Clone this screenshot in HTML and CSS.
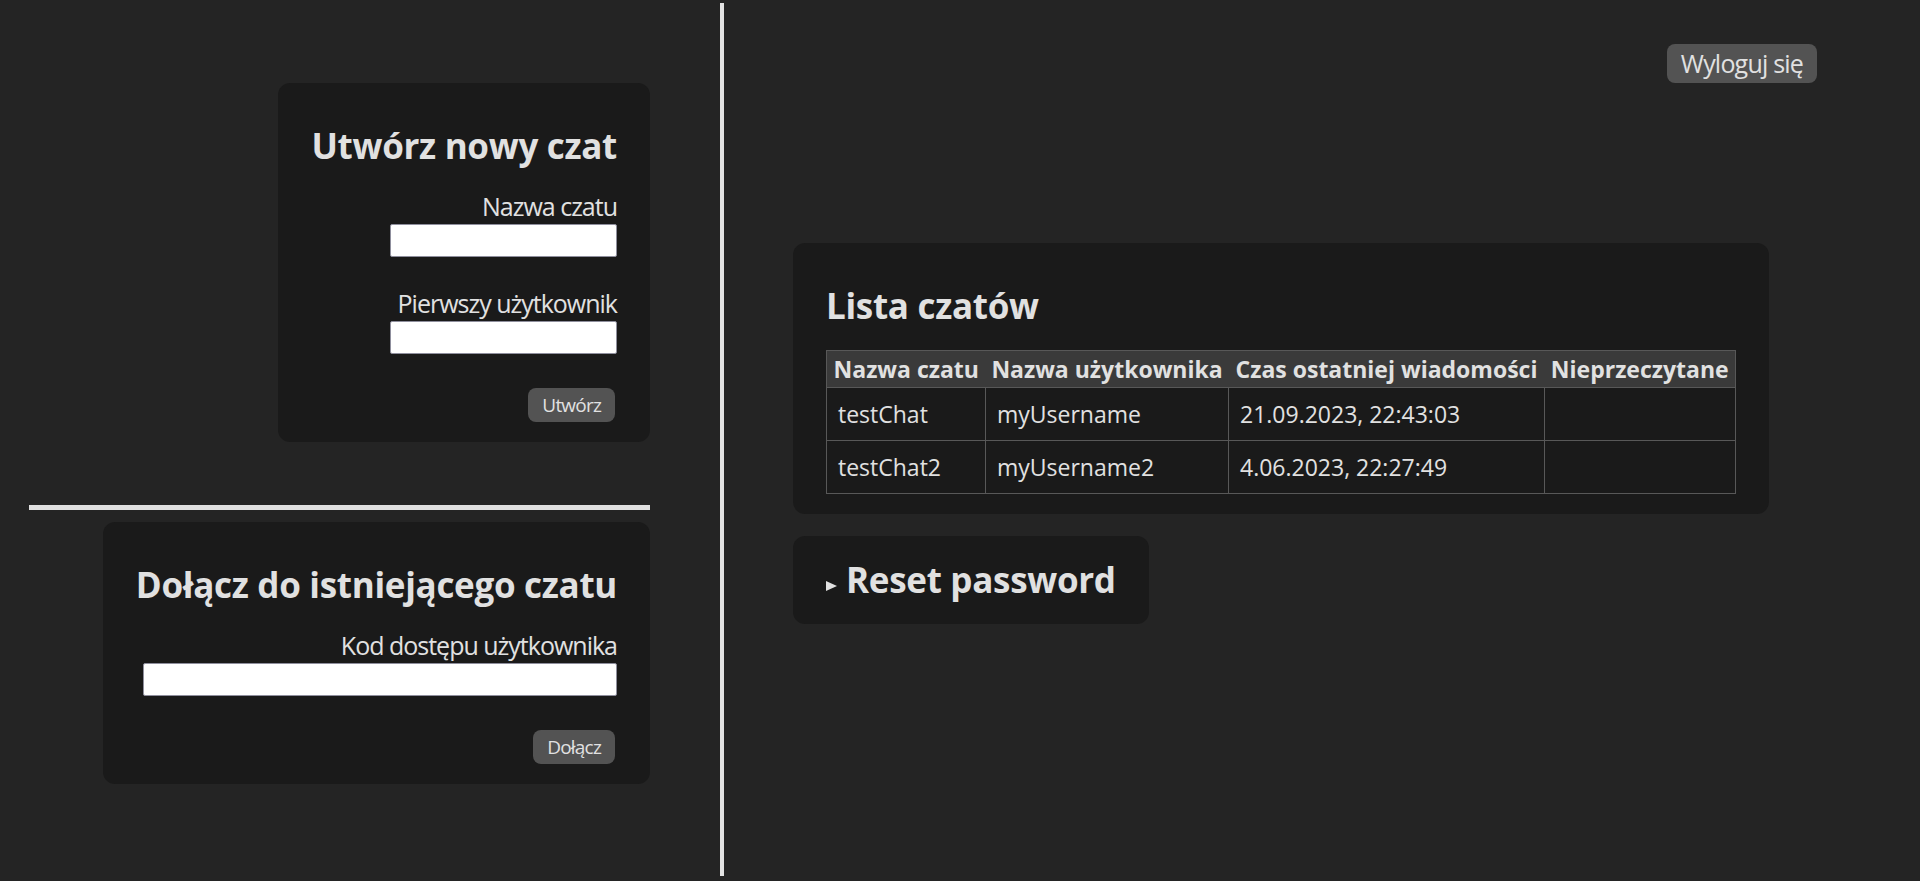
FILE: index.html
```html
<!DOCTYPE html>
<html lang="pl">
<head>
<meta charset="utf-8">
<title>Czat</title>
<link rel="stylesheet" href="styles.css">
</head>
<body>
<div class="layout">
  <aside class="side">
    <form class="card card-create">
      <h2 class="card-title">Utwórz nowy czat</h2>
      <label class="field-label">Nazwa czatu</label>
      <input class="field-input field-short" type="text">
      <label class="field-label field-gap">Pierwszy użytkownik</label>
      <input class="field-input field-short" type="text">
      <button class="btn btn-small" type="button">Utwórz</button>
    </form>
    <hr class="divider">
    <form class="card card-join">
      <h2 class="card-title">Dołącz do istniejącego czatu</h2>
      <label class="field-label">Kod dostępu użytkownika</label>
      <input class="field-input field-long" type="text">
      <button class="btn btn-small" type="button">Dołącz</button>
    </form>
  </aside>
  <div class="vline"></div>
  <main class="main">
    <div class="topbar">
      <button class="btn btn-logout" type="button">Wyloguj się</button>
    </div>
    <section class="card card-list">
      <h2 class="card-title list-title">Lista czatów</h2>
      <table class="chats">
        <colgroup>
          <col class="c1"><col class="c2"><col class="c3"><col class="c4">
        </colgroup>
        <thead>
          <tr><th>Nazwa czatu</th><th>Nazwa użytkownika</th><th>Czas ostatniej wiadomości</th><th>Nieprzeczytane</th></tr>
        </thead>
        <tbody>
          <tr><td>testChat</td><td>myUsername</td><td>21.09.2023, 22:43:03</td><td></td></tr>
          <tr><td>testChat2</td><td>myUsername2</td><td>4.06.2023, 22:27:49</td><td></td></tr>
        </tbody>
      </table>
    </section>
    <details class="card card-reset">
      <summary class="reset-summary"><span class="tri"></span><h2 class="reset-title">Reset password</h2></summary>
    </details>
  </main>
</div>
</body>
</html>
```
FILE: styles.css
```css
* { box-sizing: border-box; }
html, body {
  margin: 0;
  padding: 0;
  background: #242424;
  color: #e1e1e1;
  font-family: "Open Sans", "Noto Sans", sans-serif;
  font-size: 25px;
}
.layout {
  display: flex;
  height: 881px;
}
.side {
  width: 720px;
  flex: none;
  display: flex;
  flex-direction: column;
  align-items: flex-end;
  padding: 83px 70px 0 29px;
}
.vline {
  width: 4px;
  flex: none;
  margin: 3px 0 5px;
  background: #e2e2e2;
}
.main {
  flex: 1;
  display: flex;
  flex-direction: column;
  align-items: flex-start;
  padding: 44px 103px 0 69px;
}
.card {
  background: #1a1a1a;
  border-radius: 12px;
  padding: 20px 33px;
}
.card-create, .card-join {
  display: flex;
  flex-direction: column;
  align-items: flex-end;
}
.card-title {
  margin: 19px 0;
  font-size: 35px;
  line-height: 48px;
  font-weight: 700;
  letter-spacing: -0.3px;
  white-space: nowrap;
}
.field-label {
  display: block;
  font-size: 25px;
  line-height: 35px;
  letter-spacing: -1px;
  text-align: right;
}
.field-gap { margin-top: 29px; }
.field-input {
  height: 33px;
  margin: 0;
  background: #fff;
  border: 1px solid #8f8f9d;
  border-radius: 2px;
}
.field-short { width: 227px; }
.field-long { width: 474px; }
.btn {
  background: #535353;
  color: #e1e1e1;
  border: none;
  border-radius: 8px;
  font-family: "Open Sans", "Noto Sans", sans-serif;
  cursor: pointer;
}
.btn-small {
  margin: 34px 2px 0 0;
  height: 34px;
  padding: 0 14px;
  font-size: 19px;
  line-height: 34px;
  letter-spacing: -0.8px;
}
.divider {
  align-self: stretch;
  height: 5px;
  margin: 63px 0 12px;
  border: none;
  background: #e0e0e0;
}
.topbar {
  align-self: stretch;
  display: flex;
  justify-content: flex-end;
}
.btn-logout {
  height: 39px;
  padding: 0 14px;
  font-size: 25px;
  line-height: 39px;
  letter-spacing: -0.8px;
}
.card-list { margin-top: 160px; }
.list-title { margin-bottom: 20px; }
.chats {
  border-collapse: collapse;
  table-layout: fixed;
  width: 909px;
  border: 1px solid #585858;
}
.c1 { width: 159px; }
.c2 { width: 243px; }
.c3 { width: 316px; }
.c4 { width: 191px; }
.chats th {
  background: #3a3a3a;
  font-size: 23px;
  line-height: 30px;
  font-weight: 700;
  padding: 3px 0;
  text-align: center;
  white-space: nowrap;
  border-bottom: 1px solid #585858;
}
.chats td {
  font-size: 23px;
  line-height: 30px;
  padding: 11px 11px;
  border: 1px solid #585858;
  white-space: nowrap;
}
.card-reset { margin-top: 22px; }
.reset-summary {
  list-style: none;
  display: flex;
  align-items: center;
  cursor: pointer;
}
.reset-summary::-webkit-details-marker { display: none; }
.tri {
  width: 0;
  height: 0;
  border-left: 11px solid #e1e1e1;
  border-top: 5.5px solid transparent;
  border-bottom: 5.5px solid transparent;
  margin: 12px 9px 0 0;
}
.reset-title {
  margin: 0;
  font-size: 35px;
  line-height: 48px;
  font-weight: 700;
  letter-spacing: -0.3px;
}
```
